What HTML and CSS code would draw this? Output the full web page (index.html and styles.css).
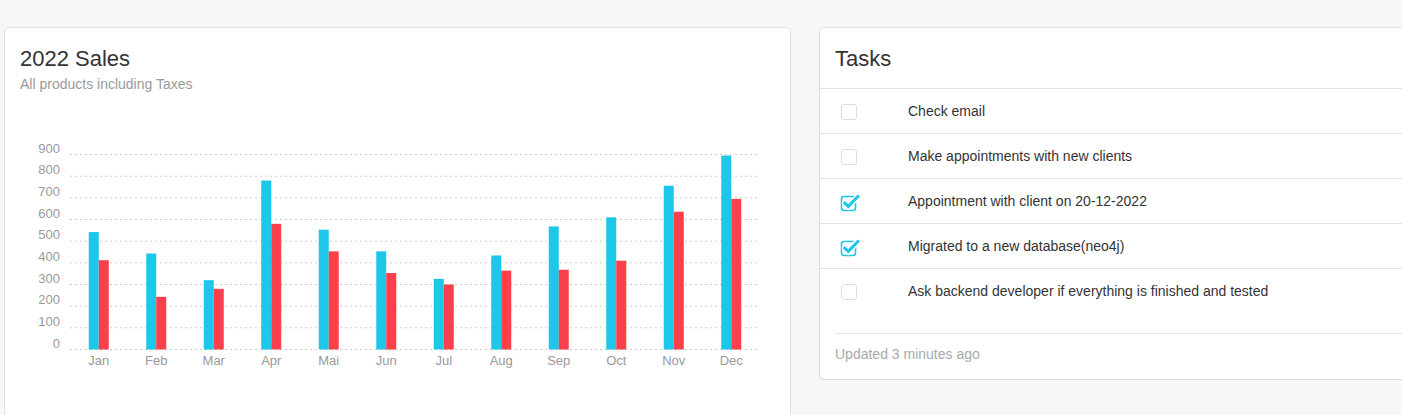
FILE: index.html
```html
<!DOCTYPE html>
<html lang="en">
<head>
<meta charset="utf-8">
<title>Dashboard</title>
<link rel="stylesheet" href="styles.css">
</head>
<body>
<div class="row">
  <section class="card card-sales">
    <header class="card-header">
      <h4 class="card-title">2022 Sales</h4>
      <p class="category">All products including Taxes</p>
    </header>
    <svg class="chart" width="785" height="330" viewBox="5 94 785 330" xmlns="http://www.w3.org/2000/svg">
      <g class="grid" stroke="rgba(0,0,0,0.2)" stroke-width="1" stroke-dasharray="2 3">
        <line x1="70" x2="760" y1="349.5" y2="349.5"/>
        <line x1="70" x2="760" y1="327.8" y2="327.8"/>
        <line x1="70" x2="760" y1="306.2" y2="306.2"/>
        <line x1="70" x2="760" y1="284.5" y2="284.5"/>
        <line x1="70" x2="760" y1="262.8" y2="262.8"/>
        <line x1="70" x2="760" y1="241.2" y2="241.2"/>
        <line x1="70" x2="760" y1="219.5" y2="219.5"/>
        <line x1="70" x2="760" y1="197.8" y2="197.8"/>
        <line x1="70" x2="760" y1="176.2" y2="176.2"/>
        <line x1="70" x2="760" y1="154.5" y2="154.5"/>
      </g>
      <g class="ylabels" text-anchor="end">
        <text x="60" y="347.5">0</text>
        <text x="60" y="325.8">100</text>
        <text x="60" y="304.2">200</text>
        <text x="60" y="282.5">300</text>
        <text x="60" y="260.8">400</text>
        <text x="60" y="239.2">500</text>
        <text x="60" y="217.5">600</text>
        <text x="60" y="195.8">700</text>
        <text x="60" y="174.2">800</text>
        <text x="60" y="152.5">900</text>
      </g>
      <g class="bars-a" fill="#1DC7EA" id="bars-a"></g>
      <g class="bars-b" fill="#FB404B" id="bars-b"></g>
      <g class="xlabels" text-anchor="middle" id="xlabels"></g>
    </svg>
  </section>

  <section class="card card-tasks">
    <header class="card-header tasks-header">
      <h4 class="card-title">Tasks</h4>
    </header>
    <ul class="task-list">
      <li class="task">
        <span class="check"></span>
        <span class="task-text">Check email</span>
      </li>
      <li class="task">
        <span class="check"></span>
        <span class="task-text">Make appointments with new clients</span>
      </li>
      <li class="task">
        <svg class="check-on" width="20" height="20" viewBox="0 0 20 20" xmlns="http://www.w3.org/2000/svg">
          <rect x="1.5" y="4.5" width="14" height="14" rx="2.5" fill="none" stroke="#1DC7EA" stroke-width="1.6"/>
          <path d="M4.8 11.2 L8.3 14.4 L17.8 4.6" fill="none" stroke="#fff" stroke-width="6" stroke-linecap="round"/>
          <path d="M4.8 11.2 L8.3 14.4 L17.8 4.6" fill="none" stroke="#1DC7EA" stroke-width="3" stroke-linecap="square"/>
        </svg>
        <span class="task-text">Appointment with client on 20-12-2022</span>
      </li>
      <li class="task">
        <svg class="check-on" width="20" height="20" viewBox="0 0 20 20" xmlns="http://www.w3.org/2000/svg">
          <rect x="1.5" y="4.5" width="14" height="14" rx="2.5" fill="none" stroke="#1DC7EA" stroke-width="1.6"/>
          <path d="M4.8 11.2 L8.3 14.4 L17.8 4.6" fill="none" stroke="#fff" stroke-width="6" stroke-linecap="round"/>
          <path d="M4.8 11.2 L8.3 14.4 L17.8 4.6" fill="none" stroke="#1DC7EA" stroke-width="3" stroke-linecap="square"/>
        </svg>
        <span class="task-text">Migrated to a new database(neo4j)</span>
      </li>
      <li class="task">
        <span class="check"></span>
        <span class="task-text">Ask backend developer if everything is finished and tested</span>
      </li>
    </ul>
    <footer class="card-footer">
      <hr class="footer-rule">
      <p class="stats">Updated 3 minutes ago</p>
    </footer>
  </section>
</div>
<script>
  (function () {
    var a = [542, 443, 320, 780, 553, 453, 326, 434, 568, 610, 756, 895];
    var b = [412, 243, 280, 580, 453, 353, 300, 364, 368, 410, 636, 695];
    var months = ['Jan','Feb','Mar','Apr','Mai','Jun','Jul','Aug','Sep','Oct','Nov','Dec'];
    var ns = 'http://www.w3.org/2000/svg';
    var base = 349.5, scale = 195 / 900, step = 57.5, left = 70;
    var ga = document.getElementById('bars-a');
    var gb = document.getElementById('bars-b');
    var gx = document.getElementById('xlabels');
    for (var i = 0; i < 12; i++) {
      var c = left + step * (i + 0.5);
      var ra = document.createElementNS(ns, 'rect');
      var ha = a[i] * scale;
      ra.setAttribute('x', c - 10); ra.setAttribute('width', 10);
      ra.setAttribute('y', base - ha); ra.setAttribute('height', ha);
      ga.appendChild(ra);
      var rb = document.createElementNS(ns, 'rect');
      var hb = b[i] * scale;
      rb.setAttribute('x', c); rb.setAttribute('width', 10);
      rb.setAttribute('y', base - hb); rb.setAttribute('height', hb);
      gb.appendChild(rb);
      var t = document.createElementNS(ns, 'text');
      t.setAttribute('x', c); t.setAttribute('y', 364.5);
      t.textContent = months[i];
      gx.appendChild(t);
    }
  })();
</script>
</body>
</html>
```

FILE: styles.css
```css
html, body {
  margin: 0;
  padding: 0;
  overflow: hidden;
  background: #f7f7f7;
  font-family: "Liberation Sans", Arial, Helvetica, sans-serif;
  color: #333;
}

.row {
  display: flex;
  gap: 30px;
  padding: 28px 0 0 5px;
  width: 1402px;
  box-sizing: border-box;
  overflow: hidden;
}

.card {
  background: #fff;
  border-radius: 4px;
  box-shadow: 0 1px 2px rgba(0, 0, 0, 0.05), 0 0 0 1px rgba(63, 63, 68, 0.1);
  flex-shrink: 0;
}

.card-sales {
  width: 785px;
}

.card-tasks {
  width: 600px;
  align-self: flex-start;
}

.card-header {
  padding: 16px 15px 0;
}

.card-title {
  margin: 0;
  font-size: 22px;
  line-height: 30px;
  font-weight: 400;
  color: #333;
}

.category {
  margin: 1px 0 0;
  font-size: 14px;
  line-height: 19px;
  color: #9a9a9a;
}

.chart {
  display: block;
}

.chart text {
  font-family: "Liberation Sans", Arial, sans-serif;
  font-size: 13px;
  fill: #9a9a9a;
}

.tasks-header {
  padding-bottom: 14px;
  border-bottom: 1px solid #e3e3e3;
}

.task-list {
  list-style: none;
  margin: 0;
  padding: 0;
}

.task {
  display: flex;
  align-items: center;
  height: 44px;
  padding-left: 21px;
  border-bottom: 1px solid #e3e3e3;
}

.task:last-child {
  border-bottom: none;
}

.check {
  width: 14px;
  height: 14px;
  border: 1px solid #dddddd;
  border-radius: 3px;
  margin-top: 2px;
  flex-shrink: 0;
}

.check-on {
  width: 20px;
  height: 20px;
  margin: 0 -3px -1px -1px;
  flex-shrink: 0;
}

.task-text {
  margin-left: 51px;
  font-size: 14px;
  line-height: 20px;
  color: #333;
}

.card-footer {
  padding: 0 15px 15px;
}

.footer-rule {
  margin: 20px 0 0;
  border: 0;
  border-top: 1px solid #e3e3e3;
  height: 0;
}

.stats {
  margin: 10px 0 0;
  font-size: 14px;
  line-height: 20px;
  color: #a9a9a9;
}
```
